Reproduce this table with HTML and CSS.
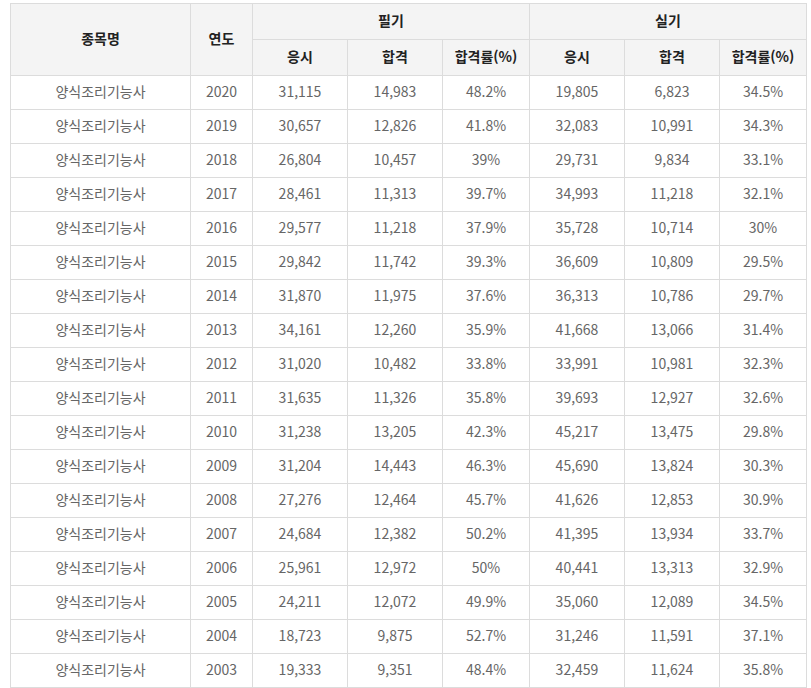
FILE: index.html
```html
<!DOCTYPE html>
<html lang="ko">
<head>
<meta charset="utf-8">
<link rel="stylesheet" href="styles.css">
</head>
<body>
<table class="stats">
  <colgroup>
    <col class="c-name"><col class="c-year">
    <col class="c-num"><col class="c-num"><col class="c-rate">
    <col class="c-num"><col class="c-num"><col class="c-rate">
  </colgroup>
  <thead>
    <tr class="h1">
      <th rowspan="2">종목명</th>
      <th rowspan="2">연도</th>
      <th colspan="3">필기</th>
      <th colspan="3">실기</th>
    </tr>
    <tr class="h2">
      <th>응시</th><th>합격</th><th>합격률(%)</th>
      <th>응시</th><th>합격</th><th>합격률(%)</th>
    </tr>
  </thead>
  <tbody>
    <tr><td>양식조리기능사</td><td>2020</td><td>31,115</td><td>14,983</td><td>48.2%</td><td>19,805</td><td>6,823</td><td>34.5%</td></tr>
    <tr><td>양식조리기능사</td><td>2019</td><td>30,657</td><td>12,826</td><td>41.8%</td><td>32,083</td><td>10,991</td><td>34.3%</td></tr>
    <tr><td>양식조리기능사</td><td>2018</td><td>26,804</td><td>10,457</td><td>39%</td><td>29,731</td><td>9,834</td><td>33.1%</td></tr>
    <tr><td>양식조리기능사</td><td>2017</td><td>28,461</td><td>11,313</td><td>39.7%</td><td>34,993</td><td>11,218</td><td>32.1%</td></tr>
    <tr><td>양식조리기능사</td><td>2016</td><td>29,577</td><td>11,218</td><td>37.9%</td><td>35,728</td><td>10,714</td><td>30%</td></tr>
    <tr><td>양식조리기능사</td><td>2015</td><td>29,842</td><td>11,742</td><td>39.3%</td><td>36,609</td><td>10,809</td><td>29.5%</td></tr>
    <tr><td>양식조리기능사</td><td>2014</td><td>31,870</td><td>11,975</td><td>37.6%</td><td>36,313</td><td>10,786</td><td>29.7%</td></tr>
    <tr><td>양식조리기능사</td><td>2013</td><td>34,161</td><td>12,260</td><td>35.9%</td><td>41,668</td><td>13,066</td><td>31.4%</td></tr>
    <tr><td>양식조리기능사</td><td>2012</td><td>31,020</td><td>10,482</td><td>33.8%</td><td>33,991</td><td>10,981</td><td>32.3%</td></tr>
    <tr><td>양식조리기능사</td><td>2011</td><td>31,635</td><td>11,326</td><td>35.8%</td><td>39,693</td><td>12,927</td><td>32.6%</td></tr>
    <tr><td>양식조리기능사</td><td>2010</td><td>31,238</td><td>13,205</td><td>42.3%</td><td>45,217</td><td>13,475</td><td>29.8%</td></tr>
    <tr><td>양식조리기능사</td><td>2009</td><td>31,204</td><td>14,443</td><td>46.3%</td><td>45,690</td><td>13,824</td><td>30.3%</td></tr>
    <tr><td>양식조리기능사</td><td>2008</td><td>27,276</td><td>12,464</td><td>45.7%</td><td>41,626</td><td>12,853</td><td>30.9%</td></tr>
    <tr><td>양식조리기능사</td><td>2007</td><td>24,684</td><td>12,382</td><td>50.2%</td><td>41,395</td><td>13,934</td><td>33.7%</td></tr>
    <tr><td>양식조리기능사</td><td>2006</td><td>25,961</td><td>12,972</td><td>50%</td><td>40,441</td><td>13,313</td><td>32.9%</td></tr>
    <tr><td>양식조리기능사</td><td>2005</td><td>24,211</td><td>12,072</td><td>49.9%</td><td>35,060</td><td>12,089</td><td>34.5%</td></tr>
    <tr><td>양식조리기능사</td><td>2004</td><td>18,723</td><td>9,875</td><td>52.7%</td><td>31,246</td><td>11,591</td><td>37.1%</td></tr>
    <tr><td>양식조리기능사</td><td>2003</td><td>19,333</td><td>9,351</td><td>48.4%</td><td>32,459</td><td>11,624</td><td>35.8%</td></tr>
  </tbody>
</table>
</body>
</html>
```

FILE: styles.css
```css
html, body {
  margin: 0;
  padding: 0;
  background: #fff;
}
body {
  padding: 3px 0 0 10px;
  font-family: "Noto Sans CJK KR", "Noto Sans", sans-serif;
  font-size: 14px;
}
.stats {
  border-collapse: collapse;
  table-layout: fixed;
  width: 797px;
}
.c-name { width: 180px; }
.c-year { width: 62px; }
.c-num { width: 95px; }
.c-rate { width: 87px; }
.stats th, .stats td {
  border: 1px solid #dcdcdc;
  text-align: center;
  padding: 0 0 3px 0;
  line-height: 18px;
}
.stats th {
  background: #f4f4f4;
  color: #222;
  font-weight: bold;
  height: 32px;
}
.stats td {
  color: #666;
  font-weight: normal;
  height: 30px;
}
```
